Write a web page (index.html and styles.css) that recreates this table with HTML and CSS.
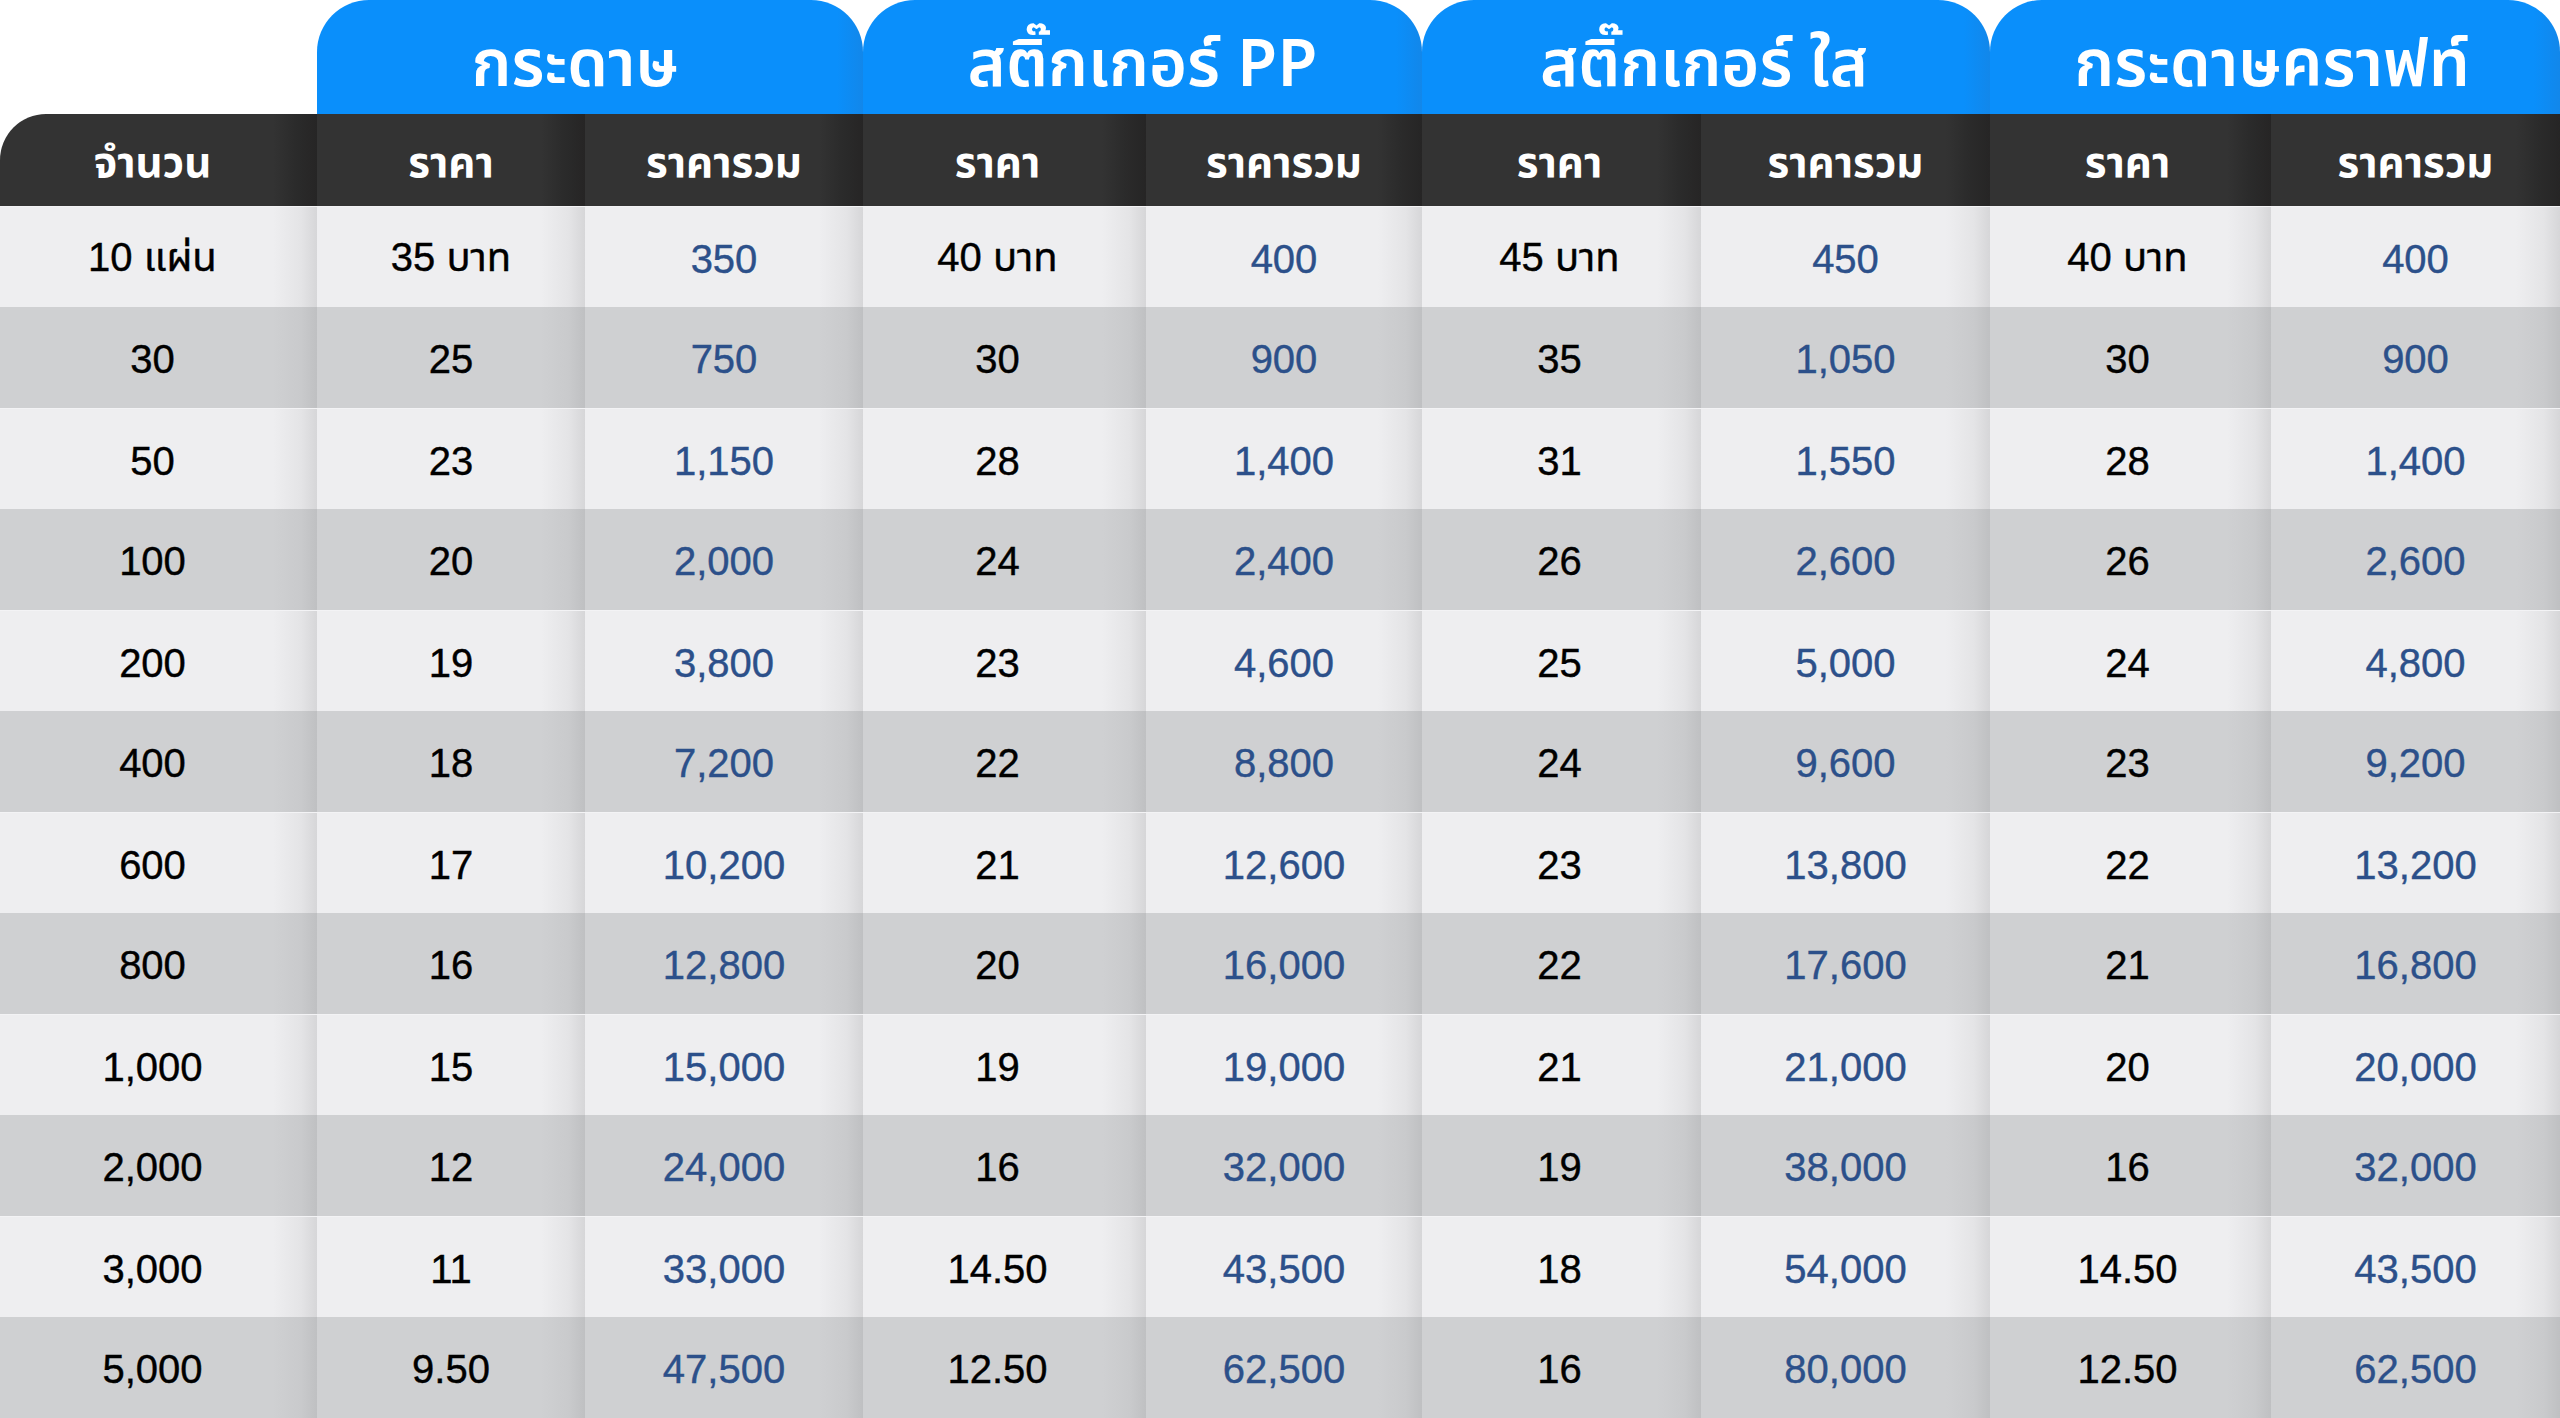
FILE: index.html
```html
<!DOCTYPE html>
<html lang="th">
<head>
<meta charset="utf-8">
<title>ตารางราคา</title>
<link rel="stylesheet" href="styles.css">
</head>
<body>
<div class="table">
  <div class="tabs">
    <div class="spacer"></div>
    <div class="tab">กระดาษ</div>
    <div class="tab">สติ๊กเกอร์ PP</div>
    <div class="tab">สติ๊กเกอร์ ใส</div>
    <div class="tab">กระดาษคราฟท์</div>
  </div>
  <div class="row head">
    <div class="hcell first">จำนวน</div>
    <div class="hcell">ราคา</div><div class="hcell">ราคารวม</div>
    <div class="hcell">ราคา</div><div class="hcell">ราคารวม</div>
    <div class="hcell">ราคา</div><div class="hcell">ราคารวม</div>
    <div class="hcell">ราคา</div><div class="hcell">ราคารวม</div>
  </div>
  <div class="row light">
    <div class="cell">10 แผ่น</div>
    <div class="cell">35 บาท</div><div class="cell total">350</div>
    <div class="cell">40 บาท</div><div class="cell total">400</div>
    <div class="cell">45 บาท</div><div class="cell total">450</div>
    <div class="cell">40 บาท</div><div class="cell total">400</div>
  </div>
  <div class="row dark">
    <div class="cell">30</div>
    <div class="cell">25</div><div class="cell total">750</div>
    <div class="cell">30</div><div class="cell total">900</div>
    <div class="cell">35</div><div class="cell total">1,050</div>
    <div class="cell">30</div><div class="cell total">900</div>
  </div>
  <div class="row light">
    <div class="cell">50</div>
    <div class="cell">23</div><div class="cell total">1,150</div>
    <div class="cell">28</div><div class="cell total">1,400</div>
    <div class="cell">31</div><div class="cell total">1,550</div>
    <div class="cell">28</div><div class="cell total">1,400</div>
  </div>
  <div class="row dark">
    <div class="cell">100</div>
    <div class="cell">20</div><div class="cell total">2,000</div>
    <div class="cell">24</div><div class="cell total">2,400</div>
    <div class="cell">26</div><div class="cell total">2,600</div>
    <div class="cell">26</div><div class="cell total">2,600</div>
  </div>
  <div class="row light">
    <div class="cell">200</div>
    <div class="cell">19</div><div class="cell total">3,800</div>
    <div class="cell">23</div><div class="cell total">4,600</div>
    <div class="cell">25</div><div class="cell total">5,000</div>
    <div class="cell">24</div><div class="cell total">4,800</div>
  </div>
  <div class="row dark">
    <div class="cell">400</div>
    <div class="cell">18</div><div class="cell total">7,200</div>
    <div class="cell">22</div><div class="cell total">8,800</div>
    <div class="cell">24</div><div class="cell total">9,600</div>
    <div class="cell">23</div><div class="cell total">9,200</div>
  </div>
  <div class="row light">
    <div class="cell">600</div>
    <div class="cell">17</div><div class="cell total">10,200</div>
    <div class="cell">21</div><div class="cell total">12,600</div>
    <div class="cell">23</div><div class="cell total">13,800</div>
    <div class="cell">22</div><div class="cell total">13,200</div>
  </div>
  <div class="row dark">
    <div class="cell">800</div>
    <div class="cell">16</div><div class="cell total">12,800</div>
    <div class="cell">20</div><div class="cell total">16,000</div>
    <div class="cell">22</div><div class="cell total">17,600</div>
    <div class="cell">21</div><div class="cell total">16,800</div>
  </div>
  <div class="row light">
    <div class="cell">1,000</div>
    <div class="cell">15</div><div class="cell total">15,000</div>
    <div class="cell">19</div><div class="cell total">19,000</div>
    <div class="cell">21</div><div class="cell total">21,000</div>
    <div class="cell">20</div><div class="cell total">20,000</div>
  </div>
  <div class="row dark">
    <div class="cell">2,000</div>
    <div class="cell">12</div><div class="cell total">24,000</div>
    <div class="cell">16</div><div class="cell total">32,000</div>
    <div class="cell">19</div><div class="cell total">38,000</div>
    <div class="cell">16</div><div class="cell total">32,000</div>
  </div>
  <div class="row light">
    <div class="cell">3,000</div>
    <div class="cell">11</div><div class="cell total">33,000</div>
    <div class="cell">14.50</div><div class="cell total">43,500</div>
    <div class="cell">18</div><div class="cell total">54,000</div>
    <div class="cell">14.50</div><div class="cell total">43,500</div>
  </div>
  <div class="row dark">
    <div class="cell">5,000</div>
    <div class="cell">9.50</div><div class="cell total">47,500</div>
    <div class="cell">12.50</div><div class="cell total">62,500</div>
    <div class="cell">16</div><div class="cell total">80,000</div>
    <div class="cell">12.50</div><div class="cell total">62,500</div>
  </div>
</div>
</body>
</html>
```
FILE: styles.css
```css
html, body {
  margin: 0;
  padding: 0;
  background: #ffffff;
}

.table {
  width: 2560px;
  display: flex;
  flex-direction: column;
}

.tabs {
  display: grid;
  grid-template-columns: 317px 546px 559px 568px 570px;
  height: 114px;
}

.tab {
  background: linear-gradient(to right, #0a8ffb calc(100% - 26px), #1287ea);
  border-radius: 52px 52px 0 0;
  color: #ffffff;
  font-family: "Noto Sans Thai", "Noto Sans", "DejaVu Sans", sans-serif;
  font-size: 65px;
  font-weight: 600;
  display: flex;
  align-items: center;
  justify-content: center;
  padding-top: 18px;
  box-sizing: border-box;
  line-height: 1;
}

.tab:nth-child(2) {
  padding-right: 30px;
}

.tab:nth-child(4) {
  padding-right: 4px;
}

.tab:nth-child(5) {
  padding-right: 6px;
}

.row {
  display: grid;
  grid-template-columns: 317px 268px 278px 283px 276px 279px 289px 281px 289px;
}

.head {
  height: 92px;
}

.hcell {
  background: linear-gradient(to right, #333333 calc(100% - 44px), #2b2b2b calc(100% - 22px), #262525);
  color: #ffffff;
  font-family: "Noto Sans Thai", "Noto Sans", "DejaVu Sans", sans-serif;
  font-size: 42px;
  font-weight: 700;
  display: flex;
  align-items: center;
  justify-content: center;
  padding-top: 8px;
  box-sizing: border-box;
}

.hcell.first {
  border-top-left-radius: 46px;
}

.row.light, .row.dark {
  height: 101px;
}

.cell {
  display: flex;
  align-items: center;
  justify-content: center;
  font-family: "Liberation Sans", "Noto Sans Thai", "DejaVu Sans", sans-serif;
  font-size: 40px;
  color: #000000;
  -webkit-text-stroke: 0.4px currentColor;
  padding-top: 4px;
  box-sizing: border-box;
}

.row > :nth-child(1) { padding-right: 12px; }
.row > :nth-child(4) { padding-right: 14px; }
.row > :nth-child(6) { padding-right: 4px; }
.row > :nth-child(8) { padding-right: 6px; }

.light .cell {
  background: linear-gradient(to right, #eeeef0 calc(100% - 44px), #e4e4e6 calc(100% - 16px), #d6d6d8);
  border-top: 1px solid #f3f3f5;
}

.dark .cell {
  background: linear-gradient(to right, #cfd0d2 calc(100% - 44px), #c9cacc calc(100% - 16px), #bfc0c2);
}

.cell.total {
  color: #2c508a;
}
```
